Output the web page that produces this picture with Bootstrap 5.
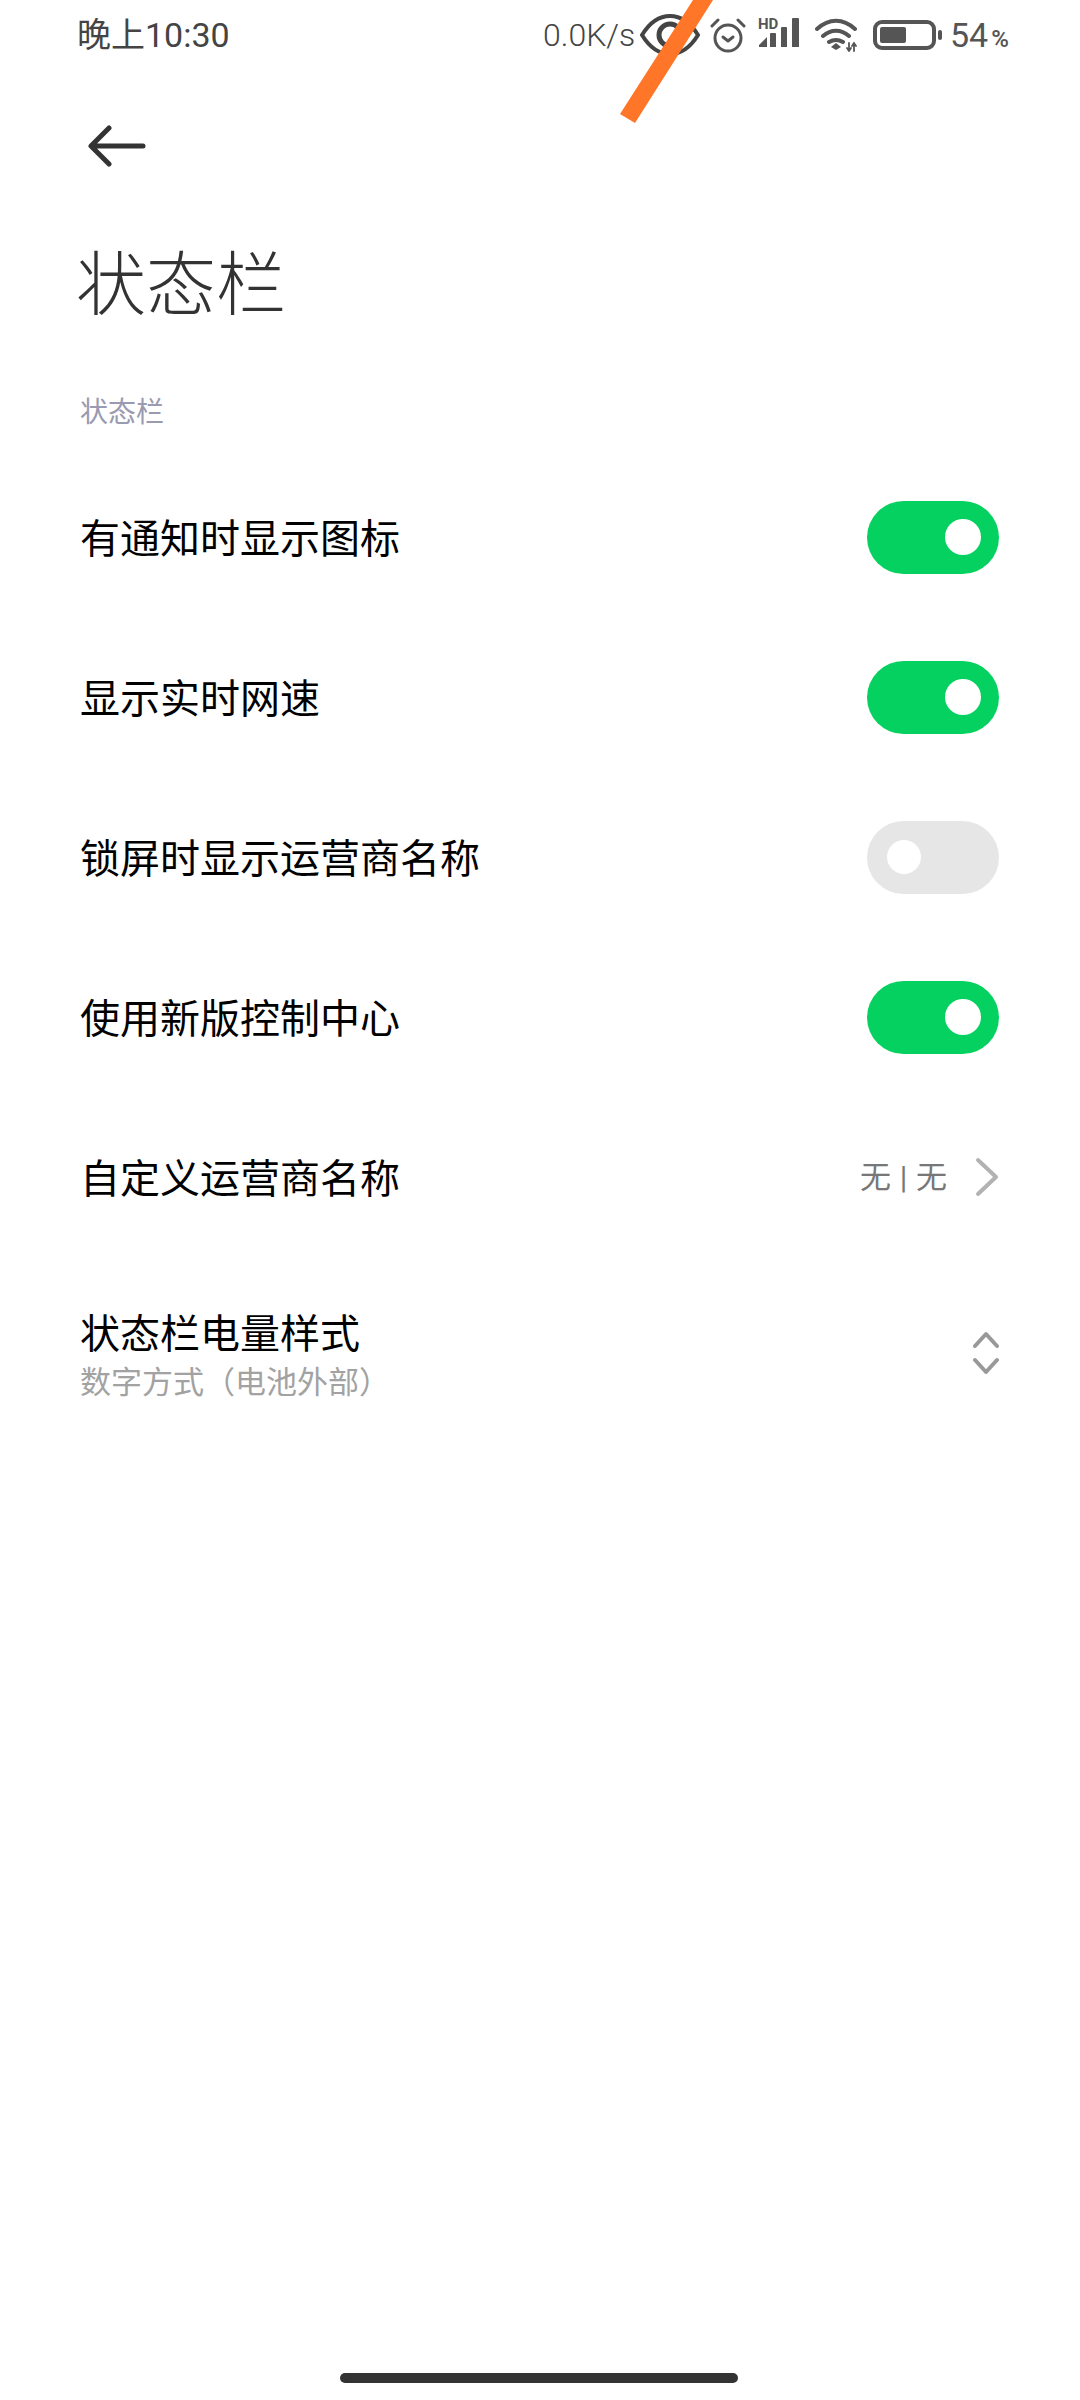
<!DOCTYPE html>
<html lang="zh-CN">
<head>
    <meta charset="UTF-8">
    <title>状态栏</title>
    <link href="https://cdn.jsdelivr.net/npm/bootstrap@5.3.0/dist/css/bootstrap.min.css" rel="stylesheet">
    <style>
        body { font-family: Roboto, "Noto Sans CJK SC", sans-serif; color: #000; background: #fff; height: 2400px; overflow: hidden; }
        .page { height: 2400px; position: relative; }
        .status-row { height: 70px; padding: 0 0 0 77px; color: #444; font-size: 32px; line-height: 1; }
        .status-time { width: 466px; font-size: 34px; }
        .status-speed { font-weight: 300; width: 97px; }
        .ic-alarm { margin-left: 10px; }
        .ic-signal { margin-left: 12px; margin-bottom: 9px; }
        .ic-wifi { margin-left: 13px; }
        .ic-batt { margin-left: 14px; }
        .status-level { margin-left: 7px; font-size: 34px; color: #555; }
        .status-pct { font-size: 24px; font-weight: 500; color: #555; margin: 8px 0 0 3px; }
        .back-row { height: 152px; padding-left: 88px; }
        .page-title { font-size: 70px; font-weight: 300; color: #333; margin: 0 0 0 76px; height: 151px; line-height: 90px; padding-top: 19px; }
        .section-label { font-size: 28px; color: #9a9ab0; padding-left: 80px; height: 84px; line-height: 40px; padding-top: 20px; }
        .set-list { --bs-list-group-border-width: 0; --bs-list-group-bg: transparent; }
        .set-row { height: 160px; padding: 0 81px 0 80px; font-size: 40px; line-height: 1.2; color: #000; }
        .set-row.tall { height: 192px; }
        .set-label { margin-top: 5px; }
        .set-sub { font-size: 31px; color: #a2a2a2; line-height: 36px; margin-top: 6px; }
        .set-value { font-size: 31px; color: #777; word-spacing: 1px; margin-right: 4px; margin-top: 2px; }
        .tgl { width: 132px; height: 73px; border-radius: 37px; background: #05d160; padding: 0 18px; }
        .tgl i { display: block; width: 36px; height: 36px; border-radius: 50%; background: #fff; }
        .tgl.off { background: #e6e6e6; padding: 0 20px; }
        .tgl.off i { width: 34px; height: 34px; }
        .home-bar { position: absolute; left: 340px; bottom: 17px; width: 398px; height: 10px; border-radius: 5px; background: #333; }
        .streak { position: absolute; left: 0; top: 0; }
        svg { display: block; flex: none; }
    </style>
</head>
<body>
<div class="page d-flex flex-column">
    <div class="status-row d-flex align-items-center">
        <div class="status-time">晚上10:30</div>
        <div class="status-speed">0.0K/s</div>
        <svg width="60" height="44" viewBox="0 0 60 44" fill="none" stroke="#444" stroke-width="4"><path d="M2 22C10 9 20 3 30 3s20 6 28 19c-8 13-18 19-28 19S10 35 2 22z"/><circle cx="30" cy="22" r="11" stroke-width="5"/></svg>
        <svg class="ic-alarm" width="36" height="36" viewBox="0 0 36 36" fill="none" stroke="#555" stroke-width="3" stroke-linecap="round" stroke-linejoin="round"><circle cx="18" cy="21" r="13"/><path d="M13 20l5 4 5-4M2 9l6-6M34 9l-6-6"/></svg>
        <svg class="ic-signal" width="44" height="34" viewBox="0 -4 44 34" fill="#555"><text x="0" y="11" font-family="Roboto, sans-serif" font-size="15" font-weight="700">HD</text><path d="M1 29v-2l8-8v10zM12 29V16q0-1 1-1h4q1 0 1 1v13zM23 29V10q0-1 1-1h4q1 0 1 1v19zM34 29V1q0-1 1-1h5q1 0 1 1v28z"/></svg>
        <svg class="ic-wifi" width="44" height="34" viewBox="0 0 44 34" fill="none" stroke="#555" stroke-width="4" stroke-linecap="round"><path d="M2 11C14 0 28 0 40 11M8 18c8-7 18-7 26 0M14 24c5-3 9-3 14 0"/><path d="M21 25l5 4-5 3-5-3z" fill="#555" stroke="none"/><path d="M34 25v8M39 25v8M32 30l2 3 2-3M37 28l2-3 2 3" stroke-width="1.8"/></svg>
        <svg class="ic-batt" width="70" height="30" viewBox="0 0 70 30" fill="none"><rect x="2" y="2" width="59" height="26" rx="7" stroke="#555" stroke-width="4"/><rect x="7" y="7" width="26" height="16" rx="2" fill="#555"/><rect x="65" y="10" width="4" height="10" rx="2" fill="#555"/></svg>
        <div class="status-level">54</div>
        <div class="status-pct">%</div>
    </div>
    <div class="back-row d-flex align-items-center">
        <svg width="58" height="42" viewBox="0 0 58 42" fill="none" stroke="#333" stroke-width="5" stroke-linecap="round" stroke-linejoin="round"><path d="M55 21H4M21 3L3 21l18 18"/></svg>
    </div>
    <h1 class="page-title">状态栏</h1>
    <div class="section-label">状态栏</div>
    <div class="list-group list-group-flush set-list">
        <div class="list-group-item set-row d-flex align-items-center justify-content-between">
            <span class="set-label">有通知时显示图标</span>
            <div class="tgl d-flex align-items-center justify-content-end"><i></i></div>
        </div>
        <div class="list-group-item set-row d-flex align-items-center justify-content-between">
            <span class="set-label">显示实时网速</span>
            <div class="tgl d-flex align-items-center justify-content-end"><i></i></div>
        </div>
        <div class="list-group-item set-row d-flex align-items-center justify-content-between">
            <span class="set-label">锁屏时显示运营商名称</span>
            <div class="tgl off d-flex align-items-center"><i></i></div>
        </div>
        <div class="list-group-item set-row d-flex align-items-center justify-content-between">
            <span class="set-label">使用新版控制中心</span>
            <div class="tgl d-flex align-items-center justify-content-end"><i></i></div>
        </div>
        <div class="list-group-item set-row d-flex align-items-center justify-content-between">
            <span class="set-label">自定义运营商名称</span>
            <div class="d-flex align-items-center">
                <span class="set-value">无 | 无</span>
                <svg class="ms-4" width="24" height="40" viewBox="0 0 24 40" fill="none" stroke="#b2b2b2" stroke-width="4" stroke-linecap="round" stroke-linejoin="round"><path d="M3 3l18 17L3 37"/></svg>
            </div>
        </div>
        <div class="list-group-item set-row tall d-flex align-items-center justify-content-between">
            <div class="set-label">
                <div>状态栏电量样式</div>
                <div class="set-sub">数字方式（电池外部）</div>
            </div>
            <svg width="26" height="44" viewBox="0 0 26 44" fill="none" stroke="#999" stroke-width="4" stroke-linecap="round" stroke-linejoin="round"><path d="M2 15L13 3l11 12M2 29l11 12 11-12"/></svg>
        </div>
    </div>
    <svg class="streak" width="1080" height="130" viewBox="0 0 1080 130"><polygon points="693,0 713,0 635,123 620,114" fill="#ff7628"/></svg>
    <div class="home-bar"></div>
</div>
<script src="https://cdn.jsdelivr.net/npm/bootstrap@5.3.0/dist/js/bootstrap.bundle.min.js"></script>
</body>
</html>
